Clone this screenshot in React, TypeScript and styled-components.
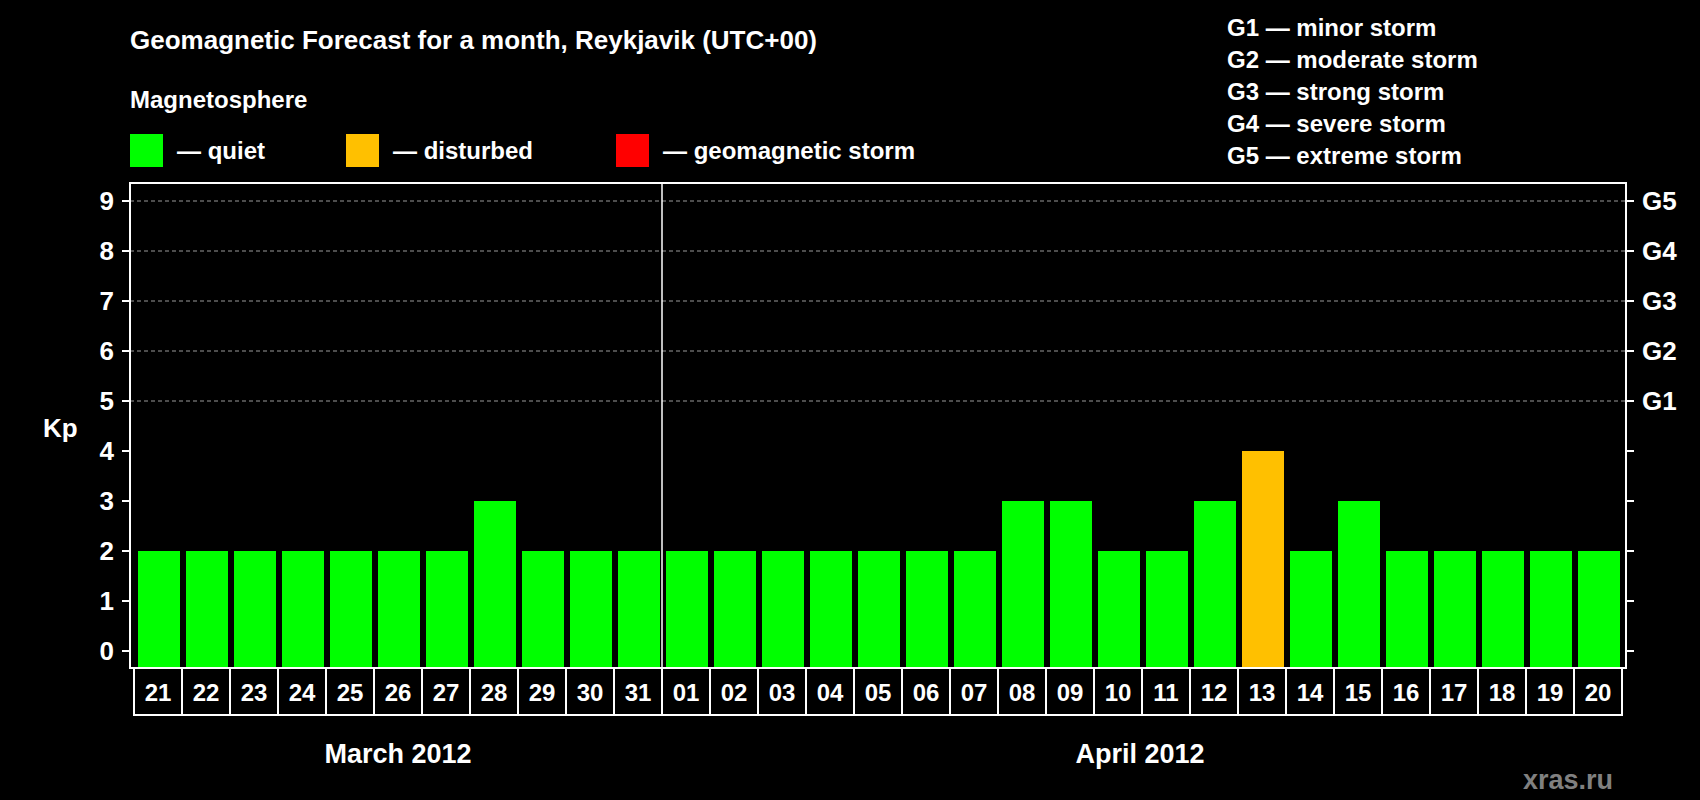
import React from "react";
import styled, { createGlobalStyle } from "styled-components";

const Global = createGlobalStyle`
  html, body { margin: 0; padding: 0; background: #000; }
  body { font-family: "Liberation Sans", Arial, sans-serif; color: #fff; }
`;

const Page = styled.div`
  width: 1700px;
  height: 800px;
  background: #000;
  display: flex;
  flex-direction: column;
  overflow: hidden;
`;

const Header = styled.div`
  height: 175px;
  display: flex;
  justify-content: space-between;
  padding: 0 0 0 130px;
`;

const LeftHead = styled.div`
  display: flex;
  flex-direction: column;
  padding-top: 24px;
`;

const Title = styled.div`
  font-size: 26px;
  font-weight: bold;
  line-height: 32px;
`;

const Sub = styled.div`
  font-size: 24px;
  font-weight: bold;
  line-height: 30px;
  margin-top: 29px;
`;

const LegendRow = styled.div`
  display: flex;
  align-items: center;
  margin-top: 19px;
`;

const LegendItem = styled.div<{ $w: number }>`
  display: flex;
  align-items: center;
  gap: 14px;
  width: ${(p) => p.$w}px;
  font-size: 24px;
  font-weight: bold;
`;

const Swatch = styled.span<{ $c: string }>`
  width: 33px;
  height: 33px;
  background: ${(p) => p.$c};
  display: inline-block;
`;

const GList = styled.div`
  width: 473px;
  padding-top: 12px;
  display: flex;
  flex-direction: column;
`;

const GItem = styled.div`
  font-size: 24px;
  font-weight: bold;
  line-height: 32px;
`;

const GREEN = "#00ff00";
const ORANGE = "#ffc000";
const RED = "#ff0000";

const days = [
  ...Array.from({ length: 11 }, (_, i) => String(21 + i)),
  ...Array.from({ length: 20 }, (_, i) => String(i + 1).padStart(2, "0")),
];
const vals = [2, 2, 2, 2, 2, 2, 2, 3, 2, 2, 2, 2, 2, 2, 2, 2, 2, 2, 3, 3, 2, 2, 3, 4, 2, 3, 2, 2, 2, 2, 2];

const L = 130, R = 1626, T = 183, B = 668;
const y0 = 651, step = 50;
const yk = (k: number) => y0 - k * step;

function Chart() {
  return (
    <svg width="1700" height="625" viewBox="0 175 1700 625" style={{ display: "block" }}>
      <g fontFamily="Liberation Sans, Arial, sans-serif" fontWeight="bold" fill="#fff">
        {[5, 6, 7, 8, 9].map((k) => (
          <line key={k} x1={L} x2={R} y1={yk(k)} y2={yk(k)} stroke="#9a9a9a" strokeDasharray="4 3" strokeWidth="1" />
        ))}
        {vals.map((v, i) => (
          <rect key={i} x={138 + i * 48} y={yk(v)} width={42} height={B - yk(v)} fill={v >= 5 ? RED : v === 4 ? ORANGE : GREEN} />
        ))}
        <rect x={L} y={T} width={R - L} height={B - T} fill="none" stroke="#fff" strokeWidth="2" />
        <line x1={662} x2={662} y1={T} y2={B} stroke="#fff" strokeWidth="1.5" />
        {Array.from({ length: 10 }, (_, k) => (
          <g key={k}>
            <line x1={L - 8} x2={L} y1={yk(k)} y2={yk(k)} stroke="#fff" strokeWidth="2" />
            <line x1={R} x2={R + 8} y1={yk(k)} y2={yk(k)} stroke="#fff" strokeWidth="2" />
            <text x={114} y={yk(k) + 9} fontSize="26" textAnchor="end">{k}</text>
          </g>
        ))}
        {[1, 2, 3, 4, 5].map((g) => (
          <text key={g} x={1642} y={yk(g + 4) + 9} fontSize="26">G{g}</text>
        ))}
        <text x={43} y={437} fontSize="26">Kp</text>
        <rect x={134} y={B} width={31 * 48} height={47} fill="none" stroke="#fff" strokeWidth="2" />
        {days.map((d, i) => (
          <g key={d}>
            {i > 0 && <line x1={134 + i * 48} x2={134 + i * 48} y1={B} y2={B + 47} stroke="#fff" strokeWidth="2" />}
            <text x={134 + i * 48 + 24} y={B + 33} fontSize="24" textAnchor="middle">{d}</text>
          </g>
        ))}
        <text x={398} y={763} fontSize="27" textAnchor="middle">March 2012</text>
        <text x={1140} y={763} fontSize="27" textAnchor="middle">April 2012</text>
        <text x={1613} y={789} fontSize="27" textAnchor="end" fill="#808080">xras.ru</text>
      </g>
    </svg>
  );
}

export default function App() {
  return (
    <Page>
      <Global />
      <Header>
        <LeftHead>
          <Title>Geomagnetic Forecast for a month, Reykjavik (UTC+00)</Title>
          <Sub>Magnetosphere</Sub>
          <LegendRow>
            <LegendItem $w={216}><Swatch $c={GREEN} />— quiet</LegendItem>
            <LegendItem $w={270}><Swatch $c={ORANGE} />— disturbed</LegendItem>
            <LegendItem $w={320}><Swatch $c={RED} />— geomagnetic storm</LegendItem>
          </LegendRow>
        </LeftHead>
        <GList>
          <GItem>G1 — minor storm</GItem>
          <GItem>G2 — moderate storm</GItem>
          <GItem>G3 — strong storm</GItem>
          <GItem>G4 — severe storm</GItem>
          <GItem>G5 — extreme storm</GItem>
        </GList>
      </Header>
      <Chart />
    </Page>
  );
}
